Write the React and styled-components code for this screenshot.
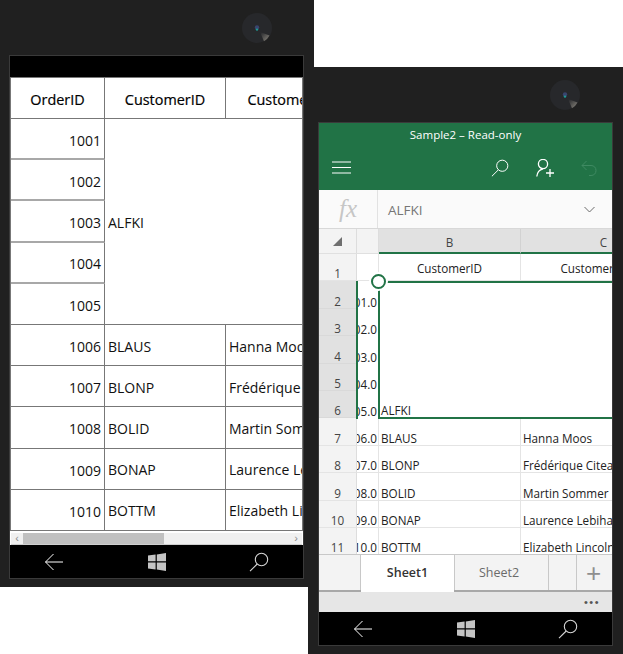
import React from "react";
import styled, { createGlobalStyle } from "styled-components";

const GlobalStyle = createGlobalStyle`
  html, body {
    margin: 0;
    padding: 0;
    background: #ffffff;
  }
  body {
    font-family: "Open Sans", "Noto Sans", "Liberation Sans", sans-serif;
    width: 623px;
    height: 654px;
    overflow: hidden;
  }
`;

//data
const orders = [
  { id: 1006, customer: "BLAUS", name: "Hanna Moos" },
  { id: 1007, customer: "BLONP", name: "Frédérique Citeaux" },
  { id: 1008, customer: "BOLID", name: "Martin Sommer" },
  { id: 1009, customer: "BONAP", name: "Laurence Lebihan" },
  { id: 1010, customer: "BOTTM", name: "Elizabeth Lincoln" },
];

//Icons
const Camera = ({ id }) => (
  <CameraBox>
    <svg width="32" height="32" viewBox="0 0 32 32">
      <defs>
        <linearGradient id={id} x1="0.1" y1="0.1" x2="0.8" y2="0.8">
          <stop offset="0" stopColor="#2a2b2e" />
          <stop offset="1" stopColor="#77746e" />
        </linearGradient>
      </defs>
      <circle cx="16" cy="16" r="15" fill="#27282b" />
      <path d="M19 20 L28.5 23.5 A15 15 0 0 1 23 29.3 Z" fill={`url(#${id})`} />
      <circle cx="16" cy="15.5" r="2.2" fill="#39456e" />
      <circle cx="16" cy="17.6" r="1.2" fill="#1e9a94" />
    </svg>
  </CameraBox>
);

const BackIcon = ({ color = "#ffffff" }) => (
  <svg width="20" height="18" viewBox="0 0 20 18" fill="none" stroke={color} strokeWidth="1">
    <path d="M19 9H1.5M9.5 1 1.5 9l8 8" />
  </svg>
);

const WindowsIcon = () => (
  <svg width="18" height="18" viewBox="0 0 18 18" fill="#c4c4c4">
    <path d="M0 2.6 7.6 1.6V8.3H0ZM8.8 1.4 18 0V8.3H8.8ZM0 9.6H7.6V16.4L0 15.4ZM8.8 9.6H18V18L8.8 16.6Z" />
  </svg>
);

const SearchIcon = ({ color = "#ffffff", size = 20 }) => (
  <svg width={size} height={size} viewBox="0 0 20 20" fill="none" stroke={color} strokeWidth="1.1">
    <circle cx="12.5" cy="7.5" r="6.2" />
    <path d="M8.2 12 1 19.2" />
  </svg>
);

const Hamburger = () => (
  <svg width="19" height="13" viewBox="0 0 19 13" fill="none" stroke="#ffffff" strokeWidth="1">
    <path d="M0 1H19M0 6.5H19M0 12H19" />
  </svg>
);

const PersonAdd = () => (
  <svg width="18" height="18" viewBox="0 0 18 18" fill="none" stroke="#ffffff" strokeWidth="1.3">
    <circle cx="7" cy="5" r="4.6" />
    <path d="M.8 17.5C1.2 13.5 3.5 10.6 7 9.8M10 14H18M14 10V18" />
  </svg>
);

const UndoIcon = () => (
  <svg width="16" height="16" viewBox="0 0 16 16" fill="none" stroke="#3f8a62" strokeWidth="1">
    <path d="M5.5 1 1 5.5 5.5 10M1 5.5H10C13 5.5 15 7.5 15 10.5S13 15.5 10 15.5H8" />
  </svg>
);

const Chevron = () => (
  <svg width="11" height="7" viewBox="0 0 11 7" fill="none" stroke="#6b6b6b" strokeWidth="1">
    <path d="M.5 1 5.5 6l5-5" />
  </svg>
);

const CornerTriangle = () => (
  <svg width="9" height="9" viewBox="0 0 9 9">
    <path d="M9 0V9H0Z" fill="#6f6f6f" />
  </svg>
);

const NavBar = () => (
  <Nav>
    <NavSlot>
      <BackIcon />
    </NavSlot>
    <NavSlot>
      <WindowsIcon />
    </NavSlot>
    <NavSlot>
      <SearchIcon color="#d6d6d6" />
    </NavSlot>
  </Nav>
);

//Left phone: data grid
const GridPhone = () => (
  <Phone>
    <Camera id="lens-left" />
    <Screen>
      <BlackBar />
      <Table>
        <HeadCell>OrderID</HeadCell>
        <HeadCell>CustomerID</HeadCell>
        <HeadCell>CustomerName</HeadCell>

        <IdStack>
          {[1001, 1002, 1003, 1004, 1005].map((id) => (
            <NumberCell key={id} $soft>
              {id}
            </NumberCell>
          ))}
        </IdStack>
        <MergedCell>ALFKI</MergedCell>

        {orders.map((o) => (
          <React.Fragment key={o.id}>
            <NumberCell>{o.id}</NumberCell>
            <TextCell>{o.customer}</TextCell>
            <TextCell>{o.name}</TextCell>
          </React.Fragment>
        ))}
      </Table>
      <ScrollBar>
        <ScrollArrow>‹</ScrollArrow>
        <ScrollTrack>
          <ScrollThumb />
        </ScrollTrack>
        <ScrollArrow>›</ScrollArrow>
      </ScrollBar>
      <NavBar />
    </Screen>
  </Phone>
);

//Right phone: Excel
const mergedRows = [2, 3, 4, 5, 6];

const ExcelPhone = () => (
  <SecondPhone>
    <Camera id="lens-right" />
    <Screen>
      <TitleBar>
        <Title>Sample2 – Read-only</Title>
        <ToolRow>
          <Hamburger />
          <ToolRight>
            <SearchIcon size={18} />
            <PersonAdd />
            <UndoIcon />
          </ToolRight>
        </ToolRow>
      </TitleBar>

      <FormulaBar>
        <FxBox>fx</FxBox>
        <FormulaText>ALFKI</FormulaText>
        <Chevron />
      </FormulaBar>

      <Sheet>
        <ColumnHeads>
          <CornerCell>
            <CornerTriangle />
          </CornerCell>
          <ColumnA />
          <ColumnHead $w="142px">B</ColumnHead>
          <ColumnHead $w="166px">C</ColumnHead>
        </ColumnHeads>

        <SheetRow>
          <RowHead>1</RowHead>
          <ACell />
          <BCell $center>CustomerID</BCell>
          <CCell $center>CustomerName</CCell>
        </SheetRow>

        <MergedBlock>
          <div>
            {mergedRows.map((n) => (
              <PlainRow key={n}>
                <RowHead $selected>{n}</RowHead>
                <ACell>{1000 + n - 1}.0</ACell>
              </PlainRow>
            ))}
          </div>
          <SheetMerged>ALFKI</SheetMerged>
          <Selection />
          <SelectionLeft />
          <Handle />
        </MergedBlock>

        {orders.map((o, i) => (
          <SheetRow key={o.id}>
            <RowHead>{i + 7}</RowHead>
            <ACell>{o.id}.0</ACell>
            <BCell>{o.customer}</BCell>
            <CCell>{o.name}</CCell>
          </SheetRow>
        ))}

        <Tabs>
          <TabStub />
          <ActiveTab>Sheet1</ActiveTab>
          <Tab>Sheet2</Tab>
          <TabSpacer />
          <AddTab>+</AddTab>
        </Tabs>
      </Sheet>

      <StatusBar>
        <Dots>•••</Dots>
      </StatusBar>
      <NavBar />
    </Screen>
  </SecondPhone>
);

const App = () => (
  <>
    <GlobalStyle />
    <Page>
      <GridPhone />
      <ExcelPhone />
    </Page>
  </>
);

//Styled Components
const Page = styled.div`
  display: flex;
  align-items: flex-start;
  width: 623px;
  height: 654px;
  overflow: hidden;
`;

const Phone = styled.div`
  position: relative;
  flex: none;
  box-sizing: border-box;
  width: 314px;
  height: 587px;
  padding: 56px 10px 0;
  background: #202020;
`;

const SecondPhone = styled(Phone)`
  width: 315px;
  margin: 67px 0 0 -6px;
  padding: 56px 11px 0;
`;

const CameraBox = styled.div`
  position: absolute;
  top: 12px;
  left: 241px;
  width: 32px;
  height: 32px;
`;

const Screen = styled.div`
  display: flex;
  flex-direction: column;
  width: 293px;
  height: 522px;
  background: #ffffff;
  overflow: hidden;
  box-shadow: 0 0 0 1px #3a3a3a;
`;

const BlackBar = styled.div`
  flex: none;
  height: 21px;
  background: #000000;
`;

const Table = styled.div`
  flex: none;
  display: grid;
  grid-template-columns: 94px 121px 150px;
  grid-template-rows: 42px 206px repeat(5, 41.2px);
  box-sizing: border-box;
  width: 293px;
  height: 454px;
  overflow: hidden;
  border-left: 1px solid #777777;
  border-right: 1px solid #777777;
  background: #ffffff;
  font-size: 14px;
  color: #111111;
`;

const HeadCell = styled.div`
  display: flex;
  align-items: center;
  justify-content: center;
  box-sizing: border-box;
  padding-top: 2px;
  border-top: 1px solid #777777;
  border-right: 1px solid #777777;
  border-bottom: 1px solid #777777;
  font-size: 14.4px;
  font-weight: 400;
  color: #000000;
  -webkit-text-stroke: 0.2px #000000;
  white-space: nowrap;
  overflow: hidden;
`;

const IdStack = styled.div`
  display: grid;
  grid-auto-rows: 41.2px;
`;

const NumberCell = styled.div`
  display: flex;
  align-items: center;
  justify-content: flex-end;
  box-sizing: border-box;
  padding: 3px 3px 0 0;
  border-right: 1px solid #777777;
  border-bottom: ${(p) => (p.$soft ? "2px solid #a8a8a8" : "1px solid #777777")};
  &:last-child {
    border-bottom: 1px solid #777777;
  }
`;

const TextCell = styled.div`
  display: flex;
  align-items: center;
  box-sizing: border-box;
  padding: 2px 0 0 3px;
  border-right: 1px solid #777777;
  border-bottom: 1px solid #777777;
  white-space: nowrap;
  overflow: hidden;
`;

const MergedCell = styled(TextCell)`
  grid-column: 2 / 4;
`;

const ScrollBar = styled.div`
  flex: none;
  display: flex;
  align-items: stretch;
  box-sizing: border-box;
  height: 14px;
  margin: 0 1px;
  padding-top: 2px;
  background: linear-gradient(#ffffff 2px, #f0f0f0 2px);
  border-bottom: 1px solid #cfcfcf;
`;

const ScrollArrow = styled.div`
  flex: none;
  width: 12px;
  font: 11px/10px "Liberation Sans", sans-serif;
  color: #8a8a8a;
  text-align: center;
`;

const ScrollTrack = styled.div`
  flex: 1;
`;

const ScrollThumb = styled.div`
  width: 141px;
  height: 100%;
  background: #c0c0c0;
`;

const Nav = styled.div`
  flex: none;
  display: grid;
  grid-template-columns: 88px 1fr 88px;
  height: 33px;
  background: #000000;
  margin-top: auto;
`;

const NavSlot = styled.div`
  display: flex;
  align-items: center;
  justify-content: center;
`;

const TitleBar = styled.div`
  flex: none;
  height: 67px;
  background: #217346;
  color: #ffffff;
`;

const Title = styled.div`
  padding-top: 4px;
  height: 18px;
  font-size: 11.5px;
  line-height: 16px;
  text-align: center;
`;

const ToolRow = styled.div`
  display: flex;
  align-items: center;
  justify-content: space-between;
  height: 45px;
  padding: 0 15px 0 13px;
`;

const ToolRight = styled.div`
  display: flex;
  align-items: center;
  gap: 27px;
`;

const FormulaBar = styled.div`
  flex: none;
  display: flex;
  align-items: center;
  box-sizing: border-box;
  height: 39px;
  padding-right: 17px;
  background: #fafafa;
  border-bottom: 1px solid #d8d8d8;
`;

const FxBox = styled.div`
  display: flex;
  align-items: center;
  justify-content: center;
  width: 58px;
  height: 100%;
  border-right: 1px solid #e2e2e2;
  font: italic 25px "Liberation Serif", serif;
  color: #c6c6c6;
`;

const FormulaText = styled.div`
  flex: 1;
  padding: 1px 0 0 10px;
  font-size: 13.5px;
  color: #767676;
`;

const Sheet = styled.div`
  position: relative;
  flex: 1;
  min-height: 0;
  overflow: hidden;
  font-size: 11.7px;
  line-height: 12px;
  color: #222222;
`;

const ColumnHeads = styled.div`
  display: flex;
  height: 25px;
  background: #f3f3f3;
  border-bottom: 1px solid #e0e0e0;
  box-sizing: border-box;
`;

const CornerCell = styled.div`
  flex: none;
  display: flex;
  align-items: center;
  justify-content: center;
  box-sizing: border-box;
  width: 38px;
  border-right: 1px solid #dddddd;
`;

const ColumnA = styled.div`
  flex: none;
  box-sizing: border-box;
  width: 22px;
  border-right: 1px solid #dddddd;
`;

const ColumnHead = styled.div`
  flex: none;
  width: ${(p) => p.$w};
  box-sizing: border-box;
  height: 25px;
  padding-top: 2px;
  display: flex;
  align-items: center;
  justify-content: center;
  background: #e1e1e1;
  border-right: 1px solid #d2d2d2;
  border-bottom: 2px solid #217346;
  color: #444444;
`;

const SheetRow = styled.div`
  display: flex;
  height: 27.4px;
  box-sizing: border-box;
  border-bottom: 1px solid #e4e4e4;
`;

const PlainRow = styled(SheetRow)`
  border-bottom: none;
`;

const RowHead = styled.div`
  flex: none;
  display: flex;
  align-items: flex-end;
  justify-content: center;
  box-sizing: border-box;
  width: 38px;
  height: 27.4px;
  padding-bottom: 1px;
  background: ${(p) => (p.$selected ? "#e1e1e1" : "#f3f3f3")};
  border-right: 1px solid #dddddd;
  border-bottom: 1px solid ${(p) => (p.$selected ? "#d9d9d9" : "#e4e4e4")};
  color: #444444;
`;

const ACell = styled.div`
  flex: none;
  display: flex;
  align-items: flex-end;
  justify-content: flex-end;
  box-sizing: border-box;
  width: 22px;
  padding: 0 1px 1px 0;
  border-right: 1px solid #e4e4e4;
  overflow: hidden;
  white-space: nowrap;
`;

const BCell = styled.div`
  flex: none;
  display: flex;
  align-items: flex-end;
  justify-content: ${(p) => (p.$center ? "center" : "flex-start")};
  box-sizing: border-box;
  width: 142px;
  padding: 0 2px ${(p) => (p.$center ? "6px" : "1px")} 2px;
  border-right: 1px solid #e4e4e4;
  overflow: hidden;
  white-space: nowrap;
`;

const CCell = styled(BCell)`
  width: 166px;
`;

const MergedBlock = styled.div`
  position: relative;
  height: 137px;
`;

const SheetMerged = styled.div`
  position: absolute;
  top: 0;
  left: 60px;
  right: 0;
  bottom: -1px;
  display: flex;
  align-items: flex-end;
  box-sizing: border-box;
  padding: 0 0 3px 2px;
  background: #ffffff;
`;

const Selection = styled.div`
  position: absolute;
  top: 0;
  left: 59px;
  right: -4px;
  bottom: -1px;
  border: 2px solid #217346;
  box-sizing: border-box;
`;

const SelectionLeft = styled.div`
  position: absolute;
  top: 0;
  left: 37px;
  bottom: -1px;
  width: 2px;
  background: #217346;
`;

const Handle = styled.div`
  position: absolute;
  top: -7px;
  left: 52px;
  width: 15px;
  height: 15px;
  box-sizing: border-box;
  border: 2px solid #217346;
  border-radius: 50%;
  background: #ffffff;
  box-shadow: 0 0 0 2px #ffffff;
`;

const Tabs = styled.div`
  position: absolute;
  left: 0;
  right: 0;
  bottom: 0;
  display: flex;
  height: 38px;
  box-sizing: border-box;
  background: #f3f3f3;
  border-top: 1px solid #c8c8c8;
  border-bottom: 2px solid #a8a8a8;
`;

const TabStub = styled.div`
  flex: none;
  width: 41px;
  border-right: 1px solid #c8c8c8;
`;

const ActiveTab = styled.div`
  flex: none;
  display: flex;
  align-items: center;
  justify-content: center;
  width: 93px;
  margin-bottom: -2px;
  padding-bottom: 2px;
  background: #ffffff;
  font-size: 12.5px;
  font-weight: 600;
  color: #333333;
`;

const Tab = styled.div`
  flex: none;
  display: flex;
  align-items: center;
  justify-content: center;
  box-sizing: border-box;
  width: 95px;
  padding-right: 5px;
  border-left: 1px solid #c8c8c8;
  border-right: 1px solid #c8c8c8;
  font-size: 12.5px;
  color: #6a6a6a;
`;

const TabSpacer = styled.div`
  flex: none;
  width: 27px;
  border-right: 1px solid #c8c8c8;
`;

const AddTab = styled.div`
  flex: 1;
  display: flex;
  align-items: center;
  justify-content: center;
  padding-right: 2px;
  font: 26px/1 "Liberation Sans", sans-serif;
  color: #8f8f8f;
`;

const StatusBar = styled.div`
  flex: none;
  display: flex;
  align-items: center;
  justify-content: flex-end;
  height: 20px;
  padding-right: 12px;
  background: #e6e6e6;
`;

const Dots = styled.div`
  font: 11px/1 "Liberation Sans", sans-serif;
  letter-spacing: 1.5px;
  color: #555555;
`;

export default App;
